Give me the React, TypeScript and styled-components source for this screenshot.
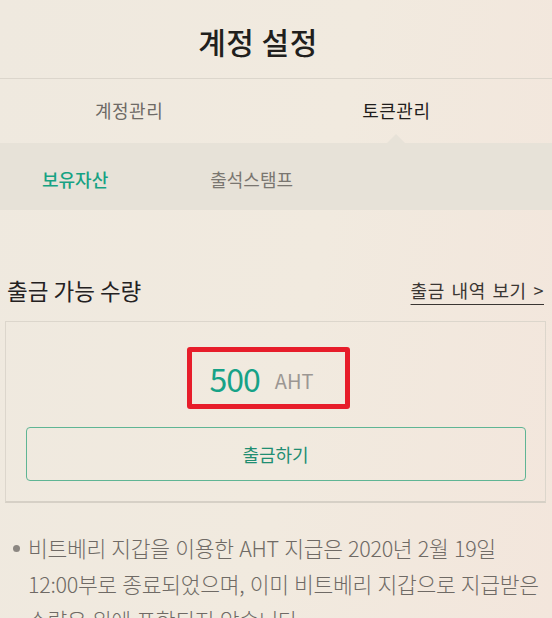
import styled, { createGlobalStyle } from 'styled-components'

const GlobalStyle = createGlobalStyle`
  html, body {
    margin: 0;
    padding: 0;
    background: #efe9df;
  }
  body {
    font-family: 'Noto Sans CJK KR', 'Noto Sans', sans-serif;
    color: #2b2826;
    overflow: hidden;
  }
`

const Page = styled.div`
  width: 552px;
  height: 618px;
  overflow: hidden;
  display: flex;
  flex-direction: column;
  background: linear-gradient(100deg, #efe9df 0%, #f1eadf 55%, #f3e6dc 100%);
`

const Header = styled.header`
  flex-shrink: 0;
  height: 79px;
  display: flex;
  align-items: center;
  justify-content: center;
  border-bottom: 1px solid #dcd6cc;
  box-sizing: border-box;
`

const Title = styled.h1`
  margin: 0;
  font-size: 30px;
  font-weight: 500;
  color: #211f1d;
  letter-spacing: 0.5px;
  transform: translate(-18px, 2px);
`

const Tabs = styled.nav`
  flex-shrink: 0;
  height: 64px;
  display: flex;
  align-items: center;
  gap: 199px;
  padding-left: 95px;
`

const Tab = styled.div<{ $active?: boolean }>`
  position: relative;
  height: 100%;
  display: flex;
  align-items: center;
  font-size: 18px;
  color: ${(p) => (p.$active ? '#1f1d1b' : '#6e6a66')};
  padding-bottom: 2px;
  box-sizing: border-box;
  letter-spacing: 0.5px;

  &::after {
    content: '';
    display: ${(p) => (p.$active ? 'block' : 'none')};
    position: absolute;
    bottom: 0;
    left: 50%;
    margin-left: -9px;
    border-left: 9px solid transparent;
    border-right: 9px solid transparent;
    border-bottom: 9px solid #e7e2d8;
  }
`

const SubTabs = styled.div`
  flex-shrink: 0;
  height: 67px;
  display: flex;
  align-items: center;
  gap: 102px;
  padding-left: 42px;
  padding-top: 4px;
  box-sizing: border-box;
  background: #e7e2d8;
`

const SubTab = styled.div<{ $active?: boolean }>`
  font-size: 18px;
  font-weight: ${(p) => (p.$active ? 500 : 400)};
  color: ${(p) => (p.$active ? '#17a283' : '#7a7670')};
`

const Content = styled.main`
  flex: 1;
  display: flex;
  flex-direction: column;
  padding: 60px 6px 0 5px;
`

const SectionHead = styled.div`
  display: flex;
  justify-content: space-between;
  align-items: center;
  padding: 0 2px 0 2px;
  height: 40px;
`

const SectionTitle = styled.h2`
  margin: 0;
  font-size: 22.5px;
  font-weight: 400;
  color: #24211f;
`

const HistoryLink = styled.a`
  font-size: 18px;
  color: #3a3633;
  text-decoration: underline;
  text-underline-offset: 6px;
  text-decoration-thickness: 1px;
  letter-spacing: 0.6px;
  word-spacing: 2px;
`

const Card = styled.section`
  margin-top: 11px;
  border: 1px solid #dcd6cc;
  border-bottom: 2px solid #d6d0c6;
  height: 182px;
  box-sizing: border-box;
  display: flex;
  flex-direction: column;
  align-items: center;
  padding: 25px 20px 0 20px;
`

const Highlight = styled.div`
  width: 163px;
  height: 62px;
  box-sizing: border-box;
  border: 5px solid #e71d2a;
  border-radius: 3px;
  display: flex;
  align-items: center;
  justify-content: center;
  gap: 15px;
  padding-right: 14px;
  transform: translateX(-7px);
`

const Amount = styled.span`
  font-size: 32px;
  font-weight: 400;
  color: #17a287;
  line-height: 1;
  letter-spacing: -1px;
`

const Unit = styled.span`
  font-size: 20px;
  color: #9c9793;
  line-height: 1;
  padding-top: 6px;
`

const WithdrawButton = styled.button`
  margin-top: 18px;
  width: 500px;
  height: 54px;
  border: 1px solid #5fb594;
  border-radius: 4px;
  background: transparent;
  font-family: inherit;
  font-size: 18px;
  color: #1f8e72;
  cursor: pointer;
`

const Notes = styled.ul`
  margin: 0;
  padding: 27px 0 0 23px;
  list-style: none;
`

const Note = styled.li`
  position: relative;
  font-size: 21.5px;
  line-height: 36px;
  font-weight: 300;
  color: #6f6a65;
  letter-spacing: -0.3px;
  word-spacing: 1px;
  white-space: nowrap;

  &::before {
    content: '';
    position: absolute;
    left: -15px;
    top: 15px;
    width: 7px;
    height: 7px;
    border-radius: 50%;
    background: #8c8782;
  }
`

export default function App() {
  return (
    <>
      <GlobalStyle />
      <Page>
        <Header>
          <Title>계정 설정</Title>
        </Header>
        <Tabs>
          <Tab>계정관리</Tab>
          <Tab $active>토큰관리</Tab>
        </Tabs>
        <SubTabs>
          <SubTab $active>보유자산</SubTab>
          <SubTab>출석스탬프</SubTab>
        </SubTabs>
        <Content>
          <SectionHead>
            <SectionTitle>출금 가능 수량</SectionTitle>
            <HistoryLink>출금 내역 보기 &gt;</HistoryLink>
          </SectionHead>
          <Card>
            <Highlight>
              <Amount>500</Amount>
              <Unit>AHT</Unit>
            </Highlight>
            <WithdrawButton>출금하기</WithdrawButton>
          </Card>
          <Notes>
            <Note>
              비트베리 지갑을 이용한 AHT 지급은 2020년 2월 19일
              <br />
              12:00부로 종료되었으며, 이미 비트베리 지갑으로 지급받은
              <br />
              수량은 위에 포함되지 않습니다.
            </Note>
          </Notes>
        </Content>
      </Page>
    </>
  )
}
